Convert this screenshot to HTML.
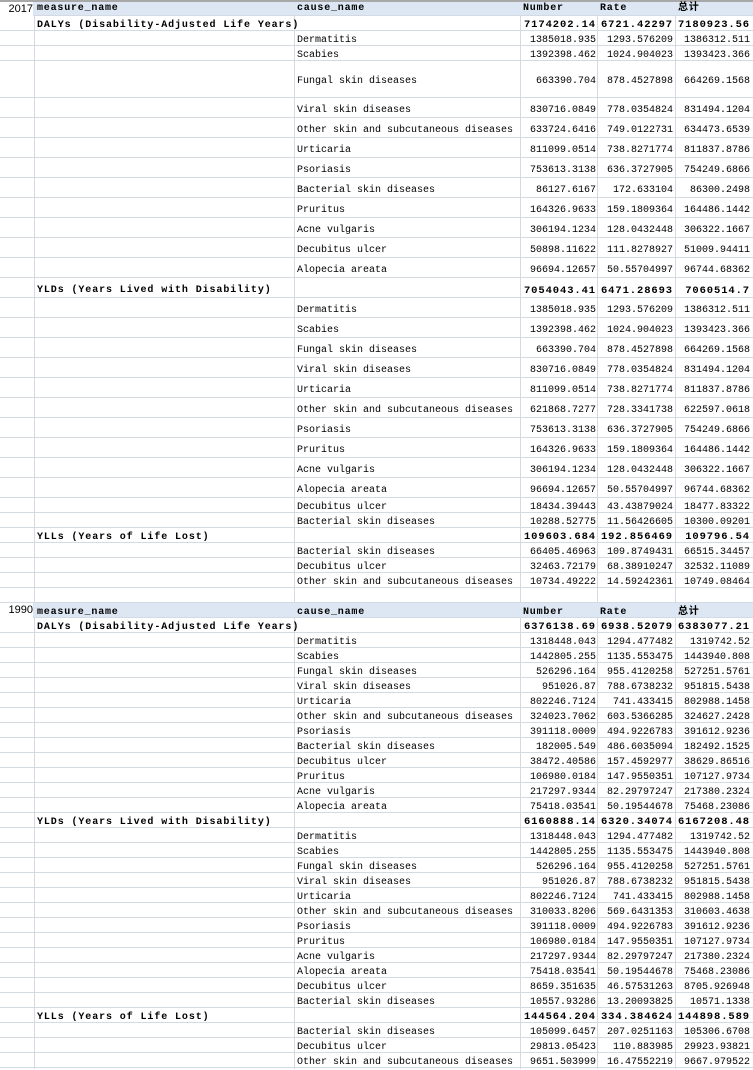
<!DOCTYPE html>
<html><head><meta charset="utf-8"><style>
body{margin:0;width:753px;height:1069px;overflow:hidden;background:#fff;position:relative;font-family:"Liberation Mono",monospace;font-size:10px;color:#000}
.r{position:absolute;left:0;width:753px;border-bottom:1px solid #d4dae4;box-sizing:border-box;white-space:pre}
.r span{position:absolute;top:2px}
.a{right:721px;font-family:"Liberation Sans",sans-serif;font-size:11px}
.b{left:37px;font-weight:bold;letter-spacing:0.9px}
.c{left:297px}
.d{right:157px}.e{right:80px}.f{right:3px}
.n span.d,.n span.e,.n span.f{font-weight:bold;font-size:10.5px;letter-spacing:0.9px}
.h{background:#dde7f3}
.h span{font-weight:bold;letter-spacing:0.8px}
.hd{left:523px}.he{left:600px}.hf{left:678px;font-family:"Liberation Mono","Noto Sans CJK SC",monospace}
.v{position:absolute;top:2px;bottom:0;width:1px;background:#d4dae4}
.t{line-height:22px}
</style></head><body>
<div style="position:absolute;left:0;top:0;width:753px;height:2px;background:#a8a8a8"></div>
<div class="v" style="left:34px"></div><div class="v" style="left:294px"></div><div class="v" style="left:520px"></div><div class="v" style="left:597px"></div><div class="v" style="left:675px"></div>

<div class="r h" style="top:2px;height:14px;line-height:14px"><span class="a" style="font-weight:normal;letter-spacing:0;background:#fff;left:0;right:auto;width:33px;text-align:right;top:0">2017</span><span class="b" style="top:0">measure_name</span><span class="c" style="top:0">cause_name</span><span class="hd" style="top:0">Number</span><span class="he" style="top:0">Rate</span><span class="hf" style="top:0">总计</span></div>
<div class="r n" style="top:16px;height:15px;line-height:15px"><span class="b">DALYs (Disability-Adjusted Life Years)</span><span class="d">7174202.14</span><span class="e">6721.42297</span><span class="f">7180923.56</span></div>
<div class="r" style="top:31px;height:15px;line-height:15px"><span class="c">Dermatitis</span><span class="d">1385018.935</span><span class="e">1293.576209</span><span class="f">1386312.511</span></div>
<div class="r" style="top:46px;height:15px;line-height:15px"><span class="c">Scabies</span><span class="d">1392398.462</span><span class="e">1024.904023</span><span class="f">1393423.366</span></div>
<div class="r" style="top:61px;height:37px;line-height:38px"><span class="c">Fungal skin diseases</span><span class="d">663390.704</span><span class="e">878.4527898</span><span class="f">664269.1568</span></div>
<div class="r t" style="top:98px;height:20px"><span class="c">Viral skin diseases</span><span class="d">830716.0849</span><span class="e">778.0354824</span><span class="f">831494.1204</span></div>
<div class="r t" style="top:118px;height:20px"><span class="c">Other skin and subcutaneous diseases</span><span class="d">633724.6416</span><span class="e">749.0122731</span><span class="f">634473.6539</span></div>
<div class="r t" style="top:138px;height:20px"><span class="c">Urticaria</span><span class="d">811099.0514</span><span class="e">738.8271774</span><span class="f">811837.8786</span></div>
<div class="r t" style="top:158px;height:20px"><span class="c">Psoriasis</span><span class="d">753613.3138</span><span class="e">636.3727905</span><span class="f">754249.6866</span></div>
<div class="r t" style="top:178px;height:20px"><span class="c">Bacterial skin diseases</span><span class="d">86127.6167</span><span class="e">172.633104</span><span class="f">86300.2498</span></div>
<div class="r t" style="top:198px;height:20px"><span class="c">Pruritus</span><span class="d">164326.9633</span><span class="e">159.1809364</span><span class="f">164486.1442</span></div>
<div class="r t" style="top:218px;height:20px"><span class="c">Acne vulgaris</span><span class="d">306194.1234</span><span class="e">128.0432448</span><span class="f">306322.1667</span></div>
<div class="r t" style="top:238px;height:20px"><span class="c">Decubitus ulcer</span><span class="d">50898.11622</span><span class="e">111.8278927</span><span class="f">51009.94411</span></div>
<div class="r t" style="top:258px;height:20px"><span class="c">Alopecia areata</span><span class="d">96694.12657</span><span class="e">50.55704997</span><span class="f">96744.68362</span></div>
<div class="r t n" style="top:278px;height:20px"><span class="b">YLDs (Years Lived with Disability)</span><span class="d">7054043.41</span><span class="e">6471.28693</span><span class="f">7060514.7</span></div>
<div class="r t" style="top:298px;height:20px"><span class="c">Dermatitis</span><span class="d">1385018.935</span><span class="e">1293.576209</span><span class="f">1386312.511</span></div>
<div class="r t" style="top:318px;height:20px"><span class="c">Scabies</span><span class="d">1392398.462</span><span class="e">1024.904023</span><span class="f">1393423.366</span></div>
<div class="r t" style="top:338px;height:20px"><span class="c">Fungal skin diseases</span><span class="d">663390.704</span><span class="e">878.4527898</span><span class="f">664269.1568</span></div>
<div class="r t" style="top:358px;height:20px"><span class="c">Viral skin diseases</span><span class="d">830716.0849</span><span class="e">778.0354824</span><span class="f">831494.1204</span></div>
<div class="r t" style="top:378px;height:20px"><span class="c">Urticaria</span><span class="d">811099.0514</span><span class="e">738.8271774</span><span class="f">811837.8786</span></div>
<div class="r t" style="top:398px;height:20px"><span class="c">Other skin and subcutaneous diseases</span><span class="d">621868.7277</span><span class="e">728.3341738</span><span class="f">622597.0618</span></div>
<div class="r t" style="top:418px;height:20px"><span class="c">Psoriasis</span><span class="d">753613.3138</span><span class="e">636.3727905</span><span class="f">754249.6866</span></div>
<div class="r t" style="top:438px;height:20px"><span class="c">Pruritus</span><span class="d">164326.9633</span><span class="e">159.1809364</span><span class="f">164486.1442</span></div>
<div class="r t" style="top:458px;height:20px"><span class="c">Acne vulgaris</span><span class="d">306194.1234</span><span class="e">128.0432448</span><span class="f">306322.1667</span></div>
<div class="r t" style="top:478px;height:20px"><span class="c">Alopecia areata</span><span class="d">96694.12657</span><span class="e">50.55704997</span><span class="f">96744.68362</span></div>
<div class="r" style="top:498px;height:15px;line-height:16px"><span class="c">Decubitus ulcer</span><span class="d">18434.39443</span><span class="e">43.43879024</span><span class="f">18477.83322</span></div>
<div class="r" style="top:513px;height:15px;line-height:15px"><span class="c">Bacterial skin diseases</span><span class="d">10288.52775</span><span class="e">11.56426605</span><span class="f">10300.09201</span></div>
<div class="r n" style="top:528px;height:15px;line-height:15px"><span class="b">YLLs (Years of Life Lost)</span><span class="d">109603.684</span><span class="e">192.856469</span><span class="f">109796.54</span></div>
<div class="r" style="top:543px;height:15px;line-height:15px"><span class="c">Bacterial skin diseases</span><span class="d">66405.46963</span><span class="e">109.8749431</span><span class="f">66515.34457</span></div>
<div class="r" style="top:558px;height:15px;line-height:15px"><span class="c">Decubitus ulcer</span><span class="d">32463.72179</span><span class="e">68.38910247</span><span class="f">32532.11089</span></div>
<div class="r" style="top:573px;height:15px;line-height:15px"><span class="c">Other skin and subcutaneous diseases</span><span class="d">10734.49222</span><span class="e">14.59242361</span><span class="f">10749.08464</span></div>
<div class="r" style="top:588px;height:15px"></div>

<div class="r h" style="top:603px;height:15px;line-height:15px"><span class="a" style="font-weight:normal;letter-spacing:0;background:#fff;left:0;right:auto;width:33px;text-align:right;top:0">1990</span><span class="b">measure_name</span><span class="c">cause_name</span><span class="hd">Number</span><span class="he">Rate</span><span class="hf">总计</span></div>
<div class="r n" style="top:618px;height:15px;line-height:15px"><span class="b">DALYs (Disability-Adjusted Life Years)</span><span class="d">6376138.69</span><span class="e">6938.52079</span><span class="f">6383077.21</span></div>
<div class="r" style="top:633px;height:15px;line-height:15px"><span class="c">Dermatitis</span><span class="d">1318448.043</span><span class="e">1294.477482</span><span class="f">1319742.52</span></div>
<div class="r" style="top:648px;height:15px;line-height:15px"><span class="c">Scabies</span><span class="d">1442805.255</span><span class="e">1135.553475</span><span class="f">1443940.808</span></div>
<div class="r" style="top:663px;height:15px;line-height:15px"><span class="c">Fungal skin diseases</span><span class="d">526296.164</span><span class="e">955.4120258</span><span class="f">527251.5761</span></div>
<div class="r" style="top:678px;height:15px;line-height:15px"><span class="c">Viral skin diseases</span><span class="d">951026.87</span><span class="e">788.6738232</span><span class="f">951815.5438</span></div>
<div class="r" style="top:693px;height:15px;line-height:15px"><span class="c">Urticaria</span><span class="d">802246.7124</span><span class="e">741.433415</span><span class="f">802988.1458</span></div>
<div class="r" style="top:708px;height:15px;line-height:15px"><span class="c">Other skin and subcutaneous diseases</span><span class="d">324023.7062</span><span class="e">603.5366285</span><span class="f">324627.2428</span></div>
<div class="r" style="top:723px;height:15px;line-height:15px"><span class="c">Psoriasis</span><span class="d">391118.0009</span><span class="e">494.9226783</span><span class="f">391612.9236</span></div>
<div class="r" style="top:738px;height:15px;line-height:15px"><span class="c">Bacterial skin diseases</span><span class="d">182005.549</span><span class="e">486.6035094</span><span class="f">182492.1525</span></div>
<div class="r" style="top:753px;height:15px;line-height:15px"><span class="c">Decubitus ulcer</span><span class="d">38472.40586</span><span class="e">157.4592977</span><span class="f">38629.86516</span></div>
<div class="r" style="top:768px;height:15px;line-height:15px"><span class="c">Pruritus</span><span class="d">106980.0184</span><span class="e">147.9550351</span><span class="f">107127.9734</span></div>
<div class="r" style="top:783px;height:15px;line-height:15px"><span class="c">Acne vulgaris</span><span class="d">217297.9344</span><span class="e">82.29797247</span><span class="f">217380.2324</span></div>
<div class="r" style="top:798px;height:15px;line-height:15px"><span class="c">Alopecia areata</span><span class="d">75418.03541</span><span class="e">50.19544678</span><span class="f">75468.23086</span></div>
<div class="r n" style="top:813px;height:15px;line-height:15px"><span class="b">YLDs (Years Lived with Disability)</span><span class="d">6160888.14</span><span class="e">6320.34074</span><span class="f">6167208.48</span></div>
<div class="r" style="top:828px;height:15px;line-height:15px"><span class="c">Dermatitis</span><span class="d">1318448.043</span><span class="e">1294.477482</span><span class="f">1319742.52</span></div>
<div class="r" style="top:843px;height:15px;line-height:15px"><span class="c">Scabies</span><span class="d">1442805.255</span><span class="e">1135.553475</span><span class="f">1443940.808</span></div>
<div class="r" style="top:858px;height:15px;line-height:15px"><span class="c">Fungal skin diseases</span><span class="d">526296.164</span><span class="e">955.4120258</span><span class="f">527251.5761</span></div>
<div class="r" style="top:873px;height:15px;line-height:15px"><span class="c">Viral skin diseases</span><span class="d">951026.87</span><span class="e">788.6738232</span><span class="f">951815.5438</span></div>
<div class="r" style="top:888px;height:15px;line-height:15px"><span class="c">Urticaria</span><span class="d">802246.7124</span><span class="e">741.433415</span><span class="f">802988.1458</span></div>
<div class="r" style="top:903px;height:15px;line-height:15px"><span class="c">Other skin and subcutaneous diseases</span><span class="d">310033.8206</span><span class="e">569.6431353</span><span class="f">310603.4638</span></div>
<div class="r" style="top:918px;height:15px;line-height:15px"><span class="c">Psoriasis</span><span class="d">391118.0009</span><span class="e">494.9226783</span><span class="f">391612.9236</span></div>
<div class="r" style="top:933px;height:15px;line-height:15px"><span class="c">Pruritus</span><span class="d">106980.0184</span><span class="e">147.9550351</span><span class="f">107127.9734</span></div>
<div class="r" style="top:948px;height:15px;line-height:15px"><span class="c">Acne vulgaris</span><span class="d">217297.9344</span><span class="e">82.29797247</span><span class="f">217380.2324</span></div>
<div class="r" style="top:963px;height:15px;line-height:15px"><span class="c">Alopecia areata</span><span class="d">75418.03541</span><span class="e">50.19544678</span><span class="f">75468.23086</span></div>
<div class="r" style="top:978px;height:15px;line-height:15px"><span class="c">Decubitus ulcer</span><span class="d">8659.351635</span><span class="e">46.57531263</span><span class="f">8705.926948</span></div>
<div class="r" style="top:993px;height:15px;line-height:15px"><span class="c">Bacterial skin diseases</span><span class="d">10557.93286</span><span class="e">13.20093825</span><span class="f">10571.1338</span></div>
<div class="r n" style="top:1008px;height:15px;line-height:15px"><span class="b">YLLs (Years of Life Lost)</span><span class="d">144564.204</span><span class="e">334.384624</span><span class="f">144898.589</span></div>
<div class="r" style="top:1023px;height:15px;line-height:15px"><span class="c">Bacterial skin diseases</span><span class="d">105099.6457</span><span class="e">207.0251163</span><span class="f">105306.6708</span></div>
<div class="r" style="top:1038px;height:15px;line-height:15px"><span class="c">Decubitus ulcer</span><span class="d">29813.05423</span><span class="e">110.883985</span><span class="f">29923.93821</span></div>
<div class="r" style="top:1053px;height:15px;line-height:15px"><span class="c">Other skin and subcutaneous diseases</span><span class="d">9651.503999</span><span class="e">16.47552219</span><span class="f">9667.979522</span></div>
</body></html>
